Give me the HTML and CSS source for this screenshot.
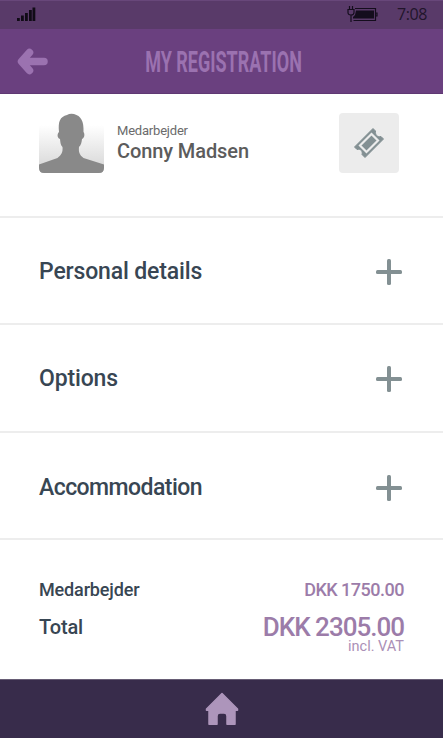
FILE: index.html
```html
<!DOCTYPE html>
<html lang="en">
<head>
<meta charset="utf-8">
<title>My registration</title>
<link rel="stylesheet" href="styles.css">
</head>
<body>
<div class="status">
  <svg class="signal" width="19" height="16" viewBox="0 0 19 16"><path d="M0 12h2.800v3H0zM4 9.500h2.800V15H4zM8 7h2.800v8H8zM12 4h2.800v11H12zM15.500 1.500h2.800V15h-2.800z"/></svg>
  <svg class="battery" width="31" height="18" viewBox="0 0 31 18"><path fill="none" stroke="#140d1d" stroke-width="1.200" d="M8 3.500h20.500v12H6.500M28.500 8h1.500v3h-1.500M1 4.500h6v3q0 2.500-3 2.500T1 7.500zM2.500 4.500V1M5.500 4.500V1M4 10v7"/><path d="M9 5.500h18v8H6V12l2-2z"/></svg>
  <span class="clock">7:08</span>
</div>
<header class="header">
  <svg class="back" width="32" height="27" viewBox="0 0 32 27"><path d="M12.500 4.500 4.500 13.500 12.500 22.500M5 13.500h22" fill="none" stroke="#9b72b0" stroke-width="7.500" stroke-linecap="round" stroke-linejoin="round"/></svg>
  <h1 class="title"><span>MY REGISTRATION</span></h1>
</header>
<main>
  <section class="profile">
    <svg class="avatar" width="65" height="60" viewBox="0 0 65 60">
      <defs><linearGradient id="shade" x1="0" y1="0" x2="0" y2="1"><stop offset=".2" stop-color="#fff"/><stop offset="1" stop-color="#d4d4d4"/></linearGradient></defs>
      <path fill="url(#shade)" d="M0 0h65v55q0 5-5 5H5q-5 0-5-5z"/>
      <path fill="#898989" d="M20 19C19 8 21 4 28 2q3-2 7-1c7 2 10 7 9.500 18 1.500 2 1 6-1.500 7-.5 4-1 6-3 8-.5 5 .5 8 4.500 11L65 51.500V55q0 5-5 5H5q-5 0-5-5v-3.500L18.500 45c4-3 5.500-6 5-11-2-2-2-4-2.500-8-3-1-3-5-1-7z"/>
    </svg>
    <div class="person">
      <span class="role">Medarbejder</span>
      <span class="name">Conny Madsen</span>
    </div>
    <div class="ticket">
      <svg width="32" height="32" viewBox="0 0 32 32"><path fill="#839093" stroke="#839093" stroke-linejoin="round" d="M20 1.500 22.500 4C22 8 24.500 10.500 28 9.500l2.500 2.500L12 30.500 9 27.500C10 24 7.500 21.500 4 22.500L1.500 20z"/><path fill="#839093" stroke="#ececec" stroke-width="2.200" d="m18.500 7 6.500 6.500L13.500 25 7 18.500z"/></svg>
    </div>
  </section>
  <section class="row"><h2>Personal details</h2><i class="plus"></i></section>
  <section class="row"><h2>Options</h2><i class="plus"></i></section>
  <section class="row last"><h2>Accommodation</h2><i class="plus"></i></section>
  <section class="totals">
    <div class="line"><span class="label">Medarbejder</span><span class="price">DKK 1750.00</span></div>
    <div class="line total"><span class="label">Total</span><span class="price">DKK 2305.00</span></div>
    <div class="vat">incl. VAT</div>
  </section>
</main>
<footer class="footer">
  <svg width="34" height="34" viewBox="0 0 34 34"><path fill="#ad95bb" stroke="#ad95bb" stroke-width="1.500" stroke-linejoin="round" d="M17 1.500 32.500 17v1.200h-2.500v14h-8V24q0-3-3-3h-4q-3 0-3 3v8.200H4v-14H1.500V17z"/></svg>
</footer>
</body>
</html>
```
FILE: styles.css
```css
* { box-sizing: border-box; }
body {
  margin: 0;
  width: 443px;
  height: 738px;
  overflow: hidden;
  display: flex;
  flex-direction: column;
  background: #fff;
  font-family: Roboto, "Open Sans", sans-serif;
  font-weight: 500;
}
h1, h2 { margin: 0; font-weight: 500; }
svg { display: block; flex: none; }
.status {
  height: 29px;
  display: flex;
  align-items: flex-start;
  padding: 5px 16px 0 17px;
  background: #593a69;
  border-top: 1px solid #68477a;
}
.signal { fill: #100b16; }
.battery { margin-left: auto; margin-top: -1px; fill: #140d1d; }
.clock {
  margin-left: 19px;
  font: 16px/16px "Open Sans", sans-serif;
  letter-spacing: -.4px;
  color: #21152b;
}
.header {
  height: 65px;
  display: flex;
  align-items: center;
  padding-left: 17px;
  background: #6a407f;
  border-bottom: 1px solid #5f3873;
}
.back { margin-top: 1px; }
.title {
  flex: 1;
  margin: 1px 45px 0 0;
  display: flex;
  justify-content: center;
  font-size: 30px;
  line-height: 36px;
  font-weight: 700;
  color: #9b72b0;
}
.title span { flex: none; transform: scaleX(.6); }
.profile {
  height: 124px;
  display: flex;
  align-items: flex-start;
  padding: 19px 44px 0 39px;
  border-bottom: 2px solid #ededed;
}
.person {
  margin: 9px 0 0 13px;
  display: flex;
  flex-direction: column;
}
.role { font-size: 13px; line-height: 18px; font-weight: 400; letter-spacing: -.2px; color: #6b6b6b; }
.name { font-size: 20px; line-height: 22px; letter-spacing: -.1px; color: #5c5c5c; }
.ticket {
  width: 60px;
  height: 60px;
  margin-left: auto;
  display: grid;
  place-items: center;
  border-radius: 4px;
  background: #ececec;
}
.row {
  height: 107.4px;
  display: flex;
  align-items: center;
  justify-content: space-between;
  padding: 2px 41px 0 39px;
  border-bottom: 2px solid #ededed;
}
.row h2 { font-size: 23px; line-height: 28px; letter-spacing: -.15px; color: #384653; }
.row.last { padding-top: 5px; }
.row.last h2 { letter-spacing: -.55px; }
.plus {
  width: 26px;
  height: 26px;
  display: grid;
  place-items: center;
}
.plus::before, .plus::after {
  content: "";
  grid-area: 1 / 1;
  width: 26px;
  height: 4px;
  border-radius: 1.500px;
  background: #839093;
}
.plus::after { transform: rotate(90deg); }
.totals { height: 139px; padding: 35px 39px 0; }
.line {
  display: flex;
  justify-content: space-between;
  align-items: center;
  height: 28px;
  font-size: 18px;
  letter-spacing: -.15px;
  color: #384653;
}
.line .price { letter-spacing: -.5px; color: #9c7ca9; }
.total { height: 47px; font-size: 20px; }
.total .price { font-size: 26px; line-height: 26px; letter-spacing: -1px; }
.vat {
  margin-top: -11px;
  text-align: right;
  font-size: 14.500px;
  line-height: 15px;
  font-weight: 400;
  color: #ab90b7;
}
.footer {
  flex: 1;
  display: grid;
  place-items: center;
  background: #382c4b;
  border-top: 1px solid #675d75;
}
```
